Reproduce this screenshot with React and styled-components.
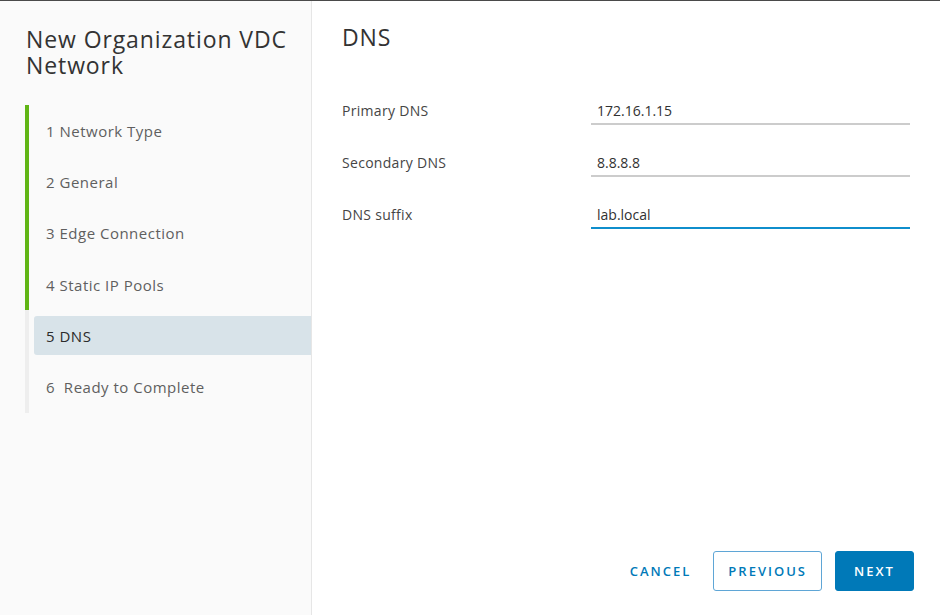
import styled, { createGlobalStyle } from 'styled-components';

const Global = createGlobalStyle`
  html, body { margin: 0; padding: 0; }
  body { font-family: "Open Sans", "Noto Sans", sans-serif; background: #fff; }
`;

const steps = [
  { n: 1, label: 'Network Type', done: true },
  { n: 2, label: 'General', done: true },
  { n: 3, label: 'Edge Connection', done: true },
  { n: 4, label: 'Static IP Pools', done: true },
  { n: 5, label: 'DNS', active: true },
  { n: 6, label: ' Ready to Complete' },
];

const fields = [
  { label: 'Primary DNS', value: '172.16.1.15' },
  { label: 'Secondary DNS', value: '8.8.8.8' },
  { label: 'DNS suffix', value: 'lab.local', focus: true },
];

const Modal = styled.div`
  display: flex;
  width: 940px;
  height: 615px;
  box-sizing: border-box;
  border-top: 1px solid #4a4a4a;
  overflow: hidden;
`;

const Sidebar = styled.div`
  width: 312px;
  flex-shrink: 0;
  background: #fafafa;
  border-right: 1px solid #e6e6e6;
  box-sizing: border-box;
  padding: 25px 0 0 25px;
`;

const Title = styled.h2`
  margin: 0 0 27px 1px;
  font-size: 23px;
  font-weight: 400;
  letter-spacing: 0.9px;
  line-height: 26px;
  color: #333;
`;

const StepList = styled.ul`
  list-style: none;
  margin: 0;
  padding: 0;
`;

const Step = styled.li`
  display: flex;
  height: 51.3px;
  border-left: 4px solid ${p => (p.done ? '#60b515' : '#eeeeee')};
  padding: 6px 0 6px 5px;
  box-sizing: border-box;
`;

const StepInner = styled.div`
  flex: 1;
  display: flex;
  align-items: center;
  padding-left: 12px;
  border-radius: 3px 0 0 3px;
  background: ${p => (p.active ? '#d8e3e9' : 'transparent')};
  color: ${p => (p.active ? '#2b2b2b' : '#5f5f5f')};
  font-size: 15px;
  letter-spacing: 0.5px;
  font-weight: ${p => (p.active ? 500 : 400)};
  white-space: pre;
`;

const Main = styled.div`
  flex: 1;
  display: flex;
  flex-direction: column;
  padding: 21px 26px 24px 30px;
`;

const Heading = styled.h3`
  margin: 0 0 47px;
  font-size: 23px;
  font-weight: 400;
  letter-spacing: 0.9px;
  line-height: 30px;
  color: #333;
`;

const Form = styled.div`
  display: flex;
  flex-direction: column;
  gap: 26px;
`;

const Row = styled.div`
  display: flex;
  align-items: flex-start;
`;

const Label = styled.label`
  width: 249px;
  font-size: 14px;
  letter-spacing: 0.3px;
  color: #454545;
  line-height: 24px;
`;

const Input = styled.div`
  flex: 1;
  margin-right: 4px;
  height: 26px;
  box-sizing: border-box;
  padding: 0 6px;
  font-size: 14px;
  line-height: 24px;
  color: #313131;
  border-bottom: ${p => (p.focus ? '2px solid #0f8ecc' : '2px solid #cccccc')};
`;

const Footer = styled.div`
  margin-top: auto;
  display: flex;
  justify-content: flex-end;
  align-items: center;
  gap: 13px;
`;

const Button = styled.button`
  height: 40px;
  min-width: ${p => (p.primary ? '79px' : '0')};
  padding: 0 ${p => (p.flat ? '8px' : '14px')};
  border-radius: 3px;
  font-family: "Open Sans", "Noto Sans", sans-serif;
  font-size: 13px;
  font-weight: 600;
  letter-spacing: 2px;
  text-transform: uppercase;
  cursor: pointer;
  border: 1px solid ${p => (p.primary ? '#0079b8' : p.flat ? 'transparent' : '#5fa6d6')};
  background: ${p => (p.primary ? '#0079b8' : '#fff')};
  color: ${p => (p.primary ? '#fff' : '#0079b8')};
`;

export default function App() {
  return (
    <>
      <Global />
      <Modal>
        <Sidebar>
          <Title>New Organization VDC Network</Title>
          <StepList>
            {steps.map(s => (
              <Step key={s.n} done={s.done}>
                <StepInner active={s.active}>
                  {`${s.n} ${s.label}`}
                </StepInner>
              </Step>
            ))}
          </StepList>
        </Sidebar>
        <Main>
          <Heading>DNS</Heading>
          <Form>
            {fields.map(f => (
              <Row key={f.label}>
                <Label>{f.label}</Label>
                <Input focus={f.focus}>{f.value}</Input>
              </Row>
            ))}
          </Form>
          <Footer>
            <Button flat>Cancel</Button>
            <Button>Previous</Button>
            <Button primary>Next</Button>
          </Footer>
        </Main>
      </Modal>
    </>
  );
}
